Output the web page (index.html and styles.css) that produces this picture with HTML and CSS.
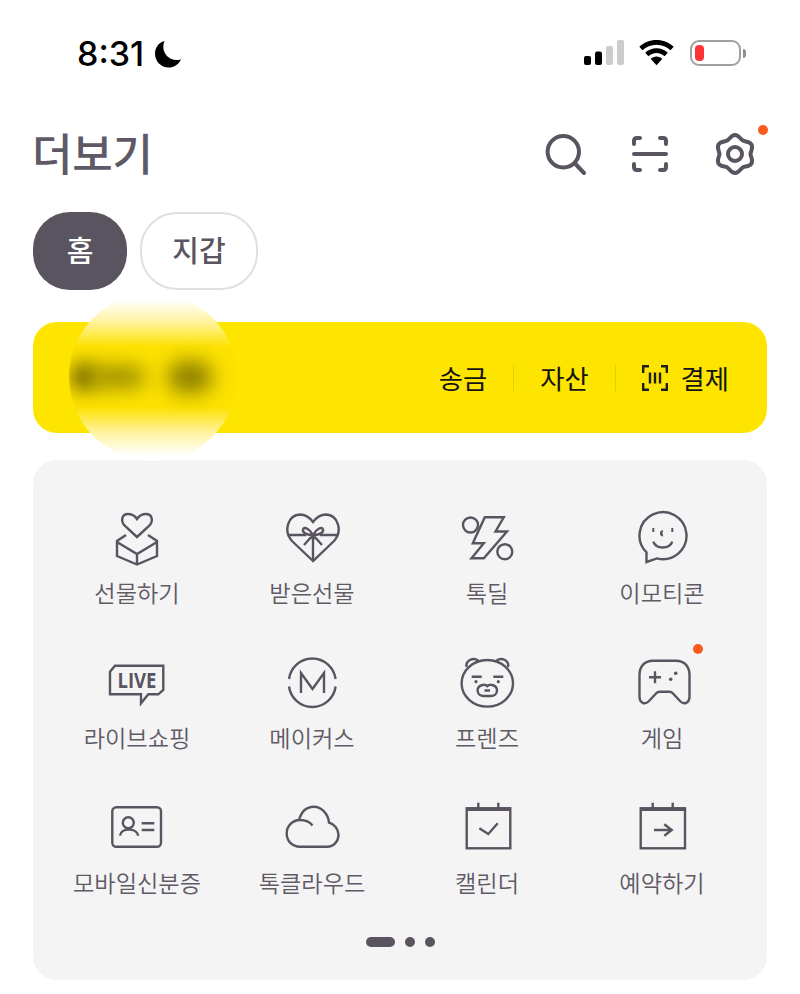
FILE: index.html
```html
<!DOCTYPE html>
<html lang="ko">
<head>
<meta charset="utf-8">
<title>더보기</title>
<link rel="stylesheet" href="styles.css">
</head>
<body>
<div class="page">
  <div class="status">
    <div class="status-left">
      <span class="time">8:31</span>
      <svg class="moon" width="28" height="28" viewBox="0 0 28 28"><path d="M10.500 1C4.600 2.600 1 7.600 1 13.800 1 21.400 7 27.500 14.600 27.500c5.600 0 10.400-3.200 12.400-8.300-1.300.6-3 .9-4.600.9C15.400 20.100 9.300 14.200 9.300 7c0-2.200.4-4.200 1.200-6z"/></svg>
    </div>
    <div class="status-right">
      <svg width="40" height="26" viewBox="0 0 40 26"><rect x="0" y="16" width="7" height="9" rx="2" fill="#000"/><rect x="11" y="11.500" width="7" height="13.500" rx="2" fill="#000"/><rect x="22" y="6" width="7" height="19" rx="2" fill="#ccc"/><rect x="33" y="0" width="7" height="25" rx="2" fill="#ccc"/></svg>
      <svg width="35" height="26" viewBox="0 0 35 26"><path d="M17.500 0C10.800 0 4.800 2.500.3 6.800l3.200 3.500C7.100 6.800 12 4.700 17.500 4.700s10.400 2.100 14 5.600l3.200-3.500C30.200 2.500 24.200 0 17.500 0z"/><path d="M17.500 8.300c-4.400 0-8.300 1.700-11.300 4.500l3.200 3.500c2.100-2 5-3.300 8.100-3.300s6 1.300 8.100 3.300l3.200-3.500c-3-2.800-6.900-4.500-11.300-4.500z"/><path d="M17.500 16.600c-2.200 0-4.200.9-5.700 2.300l5.700 6.300 5.700-6.300c-1.500-1.400-3.500-2.300-5.700-2.300z"/></svg>
      <div class="battery"><div class="battery-body"><div class="battery-fill"></div></div><div class="battery-tip"></div></div>
    </div>
  </div>

  <div class="header">
    <h1 class="title">더보기</h1>
    <div class="header-icons">
      <svg class="ico" width="44" height="44" viewBox="0 0 44 44"><circle cx="20.300" cy="19.700" r="15.700"/><path d="M32 31.500l9 9.500"/></svg>
      <svg class="ico" width="44" height="44" viewBox="0 0 44 44"><path d="M12 6H9Q6 6 6 9v3M32 6h3q3 0 3 3v3M12 38H9q-3 0-3-3v-3M32 38h3q3 0 3-3v-3M6 22h32"/></svg>
      <div class="gear">
        <svg class="ico" width="44" height="44" viewBox="0 0 44 44"><path d="M22 3C26 3 27.600 7.350 29.750 8.600 31.900 9.850 36.500 9.040 38.500 12.500 40.500 15.960 37.500 19.500 37.500 22 37.500 24.500 40.500 28.040 38.500 31.500 36.500 34.960 31.900 34.150 29.750 35.400 27.600 36.650 26 41 22 41 18 41 16.400 36.650 14.250 35.400 12.100 34.150 7.500 34.960 5.500 31.500 3.500 28.040 6.500 24.500 6.500 22 6.500 19.500 3.500 15.960 5.500 12.500 7.500 9.040 12.100 9.850 14.250 8.600 16.400 7.350 18 3 22 3Z"/><circle cx="22" cy="22" r="7"/></svg>
        <span class="dot gear-dot"></span>
      </div>
    </div>
  </div>

  <div class="tabs">
    <div class="tab tab-on">홈</div>
    <div class="tab tab-off">지갑</div>
  </div>

  <div class="pay">
    <div class="redact">
      <span class="blob blob-a"></span><span class="blob blob-b"></span><span class="blob blob-c"></span>
    </div>
    <div class="pay-actions">
      <span>송금</span>
      <i class="sep"></i>
      <span>자산</span>
      <i class="sep"></i>
      <span class="pay-last">
        <svg width="26" height="26" viewBox="0 0 26 26" fill="none" stroke="#1e1e1e" stroke-width="2.400"><path d="M7 1.200H1.200V8M19 1.200H24.800V8M7 24.800H1.200V18M19 24.800H24.800V18M8 7.500V18.500M13 7.500V18.500M18 7.500V18.500"/></svg>
        결제
      </span>
    </div>
  </div>

  <div class="panel">
    <div class="grid">
      <div class="cell">
        <svg class="ico thin" width="60" height="60" viewBox="0 0 60 60"><path d="M30 29L18 18C13 13 15 6 21 6 25 6 28 8 30 11 32 8 35 6 39 6 45 6 47 13 42 18Z"/><path d="M19 27L10 33V48L30 56.500 50 48V33L41 27M10 34L30 46 50 34M30 46V56.500"/></svg>
        <span class="label">선물하기</span>
      </div>
      <div class="cell">
        <svg class="ico thin" width="60" height="60" viewBox="0 0 60 60"><path d="M31 53L10 33C1 23 6 7 18 6.500 24 6.500 28 10 31 14 34 10 38 6.500 44 6.500 56 7 61 23 52 33Z"/><path d="M5.500 27H24M38 27H56.500M31 29V53M31 27C28 21 22 18 21 21.500 20 25 26 27 31 27 36 27 42 25 41 21.500 40 18 34 21 31 27ZM31 27L22 37M31 27L40 37"/></svg>
        <span class="label">받은선물</span>
      </div>
      <div class="cell">
        <svg class="ico thin" width="60" height="60" viewBox="0 0 60 60"><circle cx="13.500" cy="17" r="7.500"/><circle cx="47.800" cy="43.700" r="7.500"/><path d="M27.800 9.300H46.800L38.500 23.500H50L26.800 50.300H14.500L26.800 35.300H15.800Z"/></svg>
        <span class="label">톡딜</span>
      </div>
      <div class="cell">
        <svg class="ico thin" width="60" height="60" viewBox="0 0 60 60"><path d="M14.500 54V44.400A23.500 23.500 0 1 1 25 50.400Z"/><path d="M21.300 33.700C24 41.500 37.500 41.500 40.300 33.700M31 23.500C28.500 23 28.500 27.500 31 27.300"/><path class="fillc" d="M20.300 20h2v4h-2zM39.300 20h2v4h-2z"/></svg>
        <span class="label">이모티콘</span>
      </div>

      <div class="cell">
        <svg class="ico thin" width="60" height="60" viewBox="0 0 60 60"><path d="M8 12.700H56.300V37L51.300 41.300H41.300L34 50.300V41.300H3V18.700Z"/><text class="live" x="10.500" y="35" textLength="39" lengthAdjust="spacingAndGlyphs">LIVE</text></svg>
        <span class="label">라이브쇼핑</span>
      </div>
      <div class="cell">
        <svg class="ico thin" width="60" height="60" viewBox="0 0 60 60"><path d="M7 26A23.500 23.500 0 0 1 53.600 26M7 33.500A23.500 23.500 0 0 0 53.600 33.500M19 40V20L30.500 36 42 20V40"/></svg>
        <span class="label">메이커스</span>
      </div>
      <div class="cell">
        <svg class="ico thin" width="60" height="60" viewBox="0 0 60 60"><ellipse cx="30.300" cy="30.300" rx="25.700" ry="23.300"/><path d="M9.700 14C8 8 16 3.500 21.300 7.700M39.300 7.700C45 3.500 52.500 8 51 14M14.700 23.700H24.700M36.300 23.700H46.300M30.300 33C33 30.500 40 32 40 37.500 40 41 37 43 34 43H26.600C23.600 43 20.600 41 20.600 37.500 20.600 32 27.600 30.500 30.300 33ZM27.500 37.500H33"/><circle class="fillc" cx="19" cy="28.700" r="1.600"/><circle class="fillc" cx="41.300" cy="28.700" r="1.600"/></svg>
        <span class="label">프렌즈</span>
      </div>
      <div class="cell">
        <svg class="ico thin" width="60" height="60" viewBox="0 0 60 60"><path d="M21 7.700H44C53 7.700 57.500 14 57.500 22V44C57.500 50 52 52 48.500 48.500L41 40.500C40 39.200 38.500 38.700 37 38.700H28C26.500 38.700 25 39.200 24 40.500L16.500 48.500C13 52 7.500 50 7.500 44V22C7.500 14 12 7.700 21 7.700Z"/><path d="M17 24.300H29M23 18.300V30.300"/><circle class="fillc" cx="38.700" cy="26.300" r="1.800"/><circle class="fillc" cx="43.700" cy="20.300" r="1.800"/></svg>
        <span class="label">게임</span>
        <span class="dot game-dot"></span>
      </div>

      <div class="cell">
        <svg class="ico thin" width="60" height="60" viewBox="0 0 60 60"><rect x="5.300" y="9.300" width="48.700" height="39.400" rx="4"/><circle cx="21.300" cy="24.700" r="5.500"/><path d="M13 37.700C14 29.500 29.500 29.500 31.300 37.700M34.700 25.300H47.300M34.700 32H47.300"/></svg>
        <span class="label">모바일신분증</span>
      </div>
      <div class="cell">
        <svg class="ico thin" width="60" height="60" viewBox="0 0 60 60"><path d="M18 48.700H45C52 48.700 56.500 43 56.500 37 56.500 31 52 26 47 24.500 46 15 39 8.700 32 8.700 25 8.700 19.500 13 17 22"/><path d="M18 48.700C10 48.700 4.700 43 4.700 35.500 4.700 28 10.500 22 18 22 23.500 22 28 24 30.500 27.500"/></svg>
        <span class="label">톡클라우드</span>
      </div>
      <div class="cell">
        <svg class="ico thin" width="60" height="60" viewBox="0 0 60 60"><rect x="9.700" y="10.300" width="43.600" height="40"/><path d="M21.300 4.700V10.300M41.300 4.700V10.300M22.300 30.300L31.300 36 40.700 25.300"/><path class="bar" d="M9.700 11.300H53.300"/></svg>
        <span class="label">캘린더</span>
      </div>
      <div class="cell">
        <svg class="ico thin" width="60" height="60" viewBox="0 0 60 60"><rect x="8.700" y="10.300" width="44.300" height="40"/><path d="M20.700 4.700V10.300M40.700 4.700V10.300M22 32H39.700M32.300 26.300L39.700 32 32.300 37.700"/><path class="bar" d="M8.700 11.300H53"/></svg>
        <span class="label">예약하기</span>
      </div>
    </div>
    <div class="pager"><span class="pager-long"></span><span class="pager-dot"></span><span class="pager-dot"></span></div>
  </div>
</div>
</body>
</html>
```

FILE: styles.css
```css
* { box-sizing: border-box; }
html, body { margin: 0; padding: 0; background: #fff; }
body { font-family: "Noto Sans CJK KR", "Noto Sans", sans-serif; color: #5a5461; }
.page { width: 800px; height: 994px; position: relative; overflow: hidden; }

.status { height: 124px; padding: 40px 54px 0 77px; display: flex; justify-content: space-between; align-items: flex-start; }
.status-left { display: flex; align-items: center; gap: 10px; height: 27px; }
.time { font-family: Inter, "Liberation Sans", sans-serif; font-weight: 550; font-size: 34px; line-height: 27px; color: #000; }
.moon { display: block; }
.status-right { display: flex; align-items: flex-start; gap: 15px; padding-left: 1px; }
.battery { display: flex; align-items: center; gap: 2px; height: 26px; margin-left: 1px; }
.battery-body { width: 51px; height: 26px; border: 2px solid #a0a0a0; border-radius: 9px; padding: 3px; }
.battery-fill { width: 9px; height: 100%; background: #fb3538; border-radius: 4px; }
.battery-tip { width: 3px; height: 9px; background: #8e8e8e; border-radius: 0 3px 3px 0; }

.header { height: 60px; padding: 0 43px 0 33px; display: flex; justify-content: space-between; align-items: center; }
.title { margin: -4px 0 0 -1px; font-size: 44px; line-height: 60px; font-weight: 500; color: #5f5966; letter-spacing: -.2px; }
.header-icons { display: flex; gap: 41px; align-items: center; }
.ico { display: block; fill: none; stroke: #5a5461; stroke-width: 4; stroke-linecap: round; stroke-linejoin: round; }
.thin { stroke-width: 2.400; stroke-linecap: butt; stroke-linejoin: miter; }
.fillc { fill: #5a5461; stroke: none; }
.bar { stroke-width: 3.400; }
.live { font-family: "Open Sans", "Liberation Sans", sans-serif; font-size: 21px; font-weight: 700; fill: #5a5461; stroke: none; }
.gear { position: relative; }
.dot { position: absolute; width: 10px; height: 10px; border-radius: 50%; background: #fa5a1e; }
.gear-dot { top: -7px; right: -11px; }

.tabs { margin-top: 28px; padding-left: 33px; display: flex; gap: 13px; }
.tab { height: 78px; padding-bottom: 4px; border-radius: 37px; display: flex; align-items: center; justify-content: center; font-size: 29px; font-weight: 500; }
.tab-on { width: 94px; background: #5a5461; color: #fff; }
.tab-off { width: 118px; border: 2px solid #e0e0e2; background: #fff; color: #5a5461; }

.pay { position: relative; margin: 32px 33px 0; height: 111px; background: #fee500; border-radius: 24px; display: flex; align-items: center; justify-content: flex-end; padding-right: 38px; }
.pay-actions { display: flex; align-items: center; gap: 26px; font-size: 26.300px; font-weight: 400; color: #141414; line-height: 30px; }
.pay-last { display: flex; align-items: center; gap: 13px; }
.sep { display: block; width: 1px; height: 26px; background: rgba(0, 0, 0, .1); }
.redact { position: absolute; left: 36px; top: -29px; width: 168px; height: 168px; border-radius: 50%; overflow: hidden; z-index: 2; background: linear-gradient(#ffffff 0%, #ffffff 4%, #fff3a0 17%, #fde200 32%, #fde200 68%, #fff3a0 83%, #ffffff 97%); }
.blob { position: absolute; display: block; filter: blur(10px); }
.blob-a { left: 3px; top: 71px; width: 24px; height: 26px; border-radius: 50%; background: #4a4400; }
.blob-b { left: 23px; top: 73px; width: 53px; height: 22px; border-radius: 10px; background: #9a8c00; }
.blob-c { left: 99px; top: 68px; width: 44px; height: 32px; border-radius: 14px; background: #8e8000; }

.panel { margin: 27px 33px 0; height: 520px; background: #f4f4f5; border-radius: 24px; padding: 48px 16.500px 0; }
.grid { display: grid; grid-template-columns: repeat(4, 175px); grid-auto-rows: 145px; }
.cell { position: relative; display: flex; flex-direction: column; align-items: center; }
.label { margin-top: 6.500px; font-size: 23.200px; line-height: 34px; font-weight: 350; color: #5f5a66; white-space: nowrap; }
.game-dot { top: -9px; left: 118px; }
.pager { margin-top: -6.500px; display: flex; justify-content: center; align-items: center; gap: 10px; }
.pager-long { width: 29px; height: 10px; border-radius: 5px; background: #5a5461; }
.pager-dot { width: 10px; height: 10px; border-radius: 50%; background: #5a5461; }
```
